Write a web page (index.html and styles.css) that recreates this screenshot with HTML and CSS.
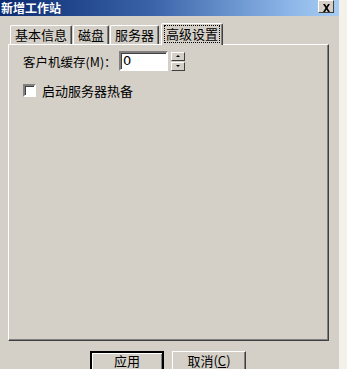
FILE: index.html
```html
<!DOCTYPE html>
<html lang="zh-CN">
<head>
    <meta charset="UTF-8">
    <title>新增工作站</title>
    <link rel="stylesheet" href="styles.css">
</head>
<body>
    <div class="screen">
        <div class="window">
            <div class="titlebar">
                <span class="title">新增工作站</span>
                <span class="close-btn">
                    <svg width="9" height="8" viewBox="0 0 9 8"><path d="M1 0h2l1.5 2.5L6 0h2L5.5 4 8 8H6L4.5 5.5 3 8H1l2.5-4z" fill="#000"/></svg>
                </span>
            </div>

            <div class="tabs">
                <div class="tab">基本信息</div>
                <div class="tab">磁盘</div>
                <div class="tab">服务器</div>
                <div class="tab active"><span class="focus">高级设置</span></div>
            </div>

            <div class="panel">
                <div class="row">
                    <label class="label">客户机缓存(M)：</label>
                    <div class="input">0</div>
                    <div class="spin">
                        <span class="spin-btn"><i class="arrow up"></i></span>
                        <span class="spin-btn"><i class="arrow down"></i></span>
                    </div>
                </div>
                <div class="row check-row">
                    <span class="checkbox"></span>
                    <span>启动服务器热备</span>
                </div>
            </div>

            <div class="buttons">
                <div class="btn default">应用</div>
                <div class="btn">取消(<u>C</u>)</div>
            </div>
        </div>
        <div class="edge"></div>
    </div>
</body>
</html>
```

FILE: styles.css
```css
* {
    margin: 0;
    padding: 0;
    box-sizing: border-box;
}

body {
    width: 347px;
    height: 369px;
    overflow: hidden;
    background: #f4f0ea;
    font-family: "Noto Sans CJK SC", "DejaVu Sans", sans-serif;
    font-size: 12px;
    color: #000;
}

.screen {
    display: flex;
    height: 369px;
}

.window {
    width: 339px;
    height: 369px;
    background: #d4d0c8;
    overflow: hidden;
}

.edge {
    flex: 1;
    background: #f4f0ea;
}

/* barre de titre */
.titlebar {
    height: 16px;
    background: linear-gradient(90deg, #0c2b70 0%, #3a64a8 45%, #8cb6e8 85%, #a8cdf2 100%);
    display: flex;
    align-items: center;
    justify-content: space-between;
    padding: 0 5px 0 1px;
}

.title {
    color: #fff;
    font-weight: bold;
    font-size: 12px;
    line-height: 16px;
    white-space: nowrap;
}

.close-btn {
    width: 16px;
    height: 13px;
    margin-top: -3px;
    background: #d4d0c8;
    border: 1px solid;
    border-color: #fff #404040 #404040 #fff;
    display: flex;
    align-items: center;
    justify-content: center;
    padding-top: 2px;
}

/* onglets */
.tabs {
    display: flex;
    align-items: flex-end;
    height: 28px;
    padding-left: 10px;
    gap: 1px;
}

.tab {
    height: 19px;
    padding: 0 4px;
    line-height: 17px;
    font-size: 13px;
    border: 1px solid;
    border-bottom: none;
    border-color: #fff #404040 transparent #fff;
    border-radius: 2px 2px 0 0;
    box-shadow: inset -1px 0 0 #808080;
}

.tab.active {
    height: 22px;
    margin-left: 1px;
    padding: 1px 2px 0;
    position: relative;
    z-index: 1;
    background: #d4d0c8;
    margin-bottom: -1px;
}

.focus {
    display: block;
    border: 1px dotted #000;
    line-height: 16px;
    padding: 0 1px;
}

.panel {
    margin-left: 8px;
    width: 321px;
    height: 297px;
    border: 1px solid;
    border-color: #fff #404040 #404040 #fff;
    box-shadow: inset -1px -1px 0 #808080;
    padding: 6px 0 0 14px;
}

.row {
    display: flex;
    align-items: center;
    height: 20px;
}

.label {
    width: 96px;
    font-size: 12.5px;
    white-space: nowrap;
}

.input {
    width: 49px;
    height: 20px;
    background: #fff;
    border: 2px solid;
    border-color: #808080 #fff #fff #808080;
    box-shadow: inset 1px 1px 0 #404040;
    font-family: "DejaVu Sans", sans-serif;
    font-size: 13px;
    line-height: 15px;
    padding-left: 2px;
}

.spin {
    margin-left: 3px;
    display: flex;
    flex-direction: column;
    gap: 1px;
}

.spin-btn {
    width: 14px;
    height: 9px;
    border: 1px solid;
    border-color: #fff #404040 #404040 #fff;
    display: flex;
    align-items: center;
    justify-content: center;
}

.arrow {
    width: 0;
    height: 0;
    border-left: 2px solid transparent;
    border-right: 2px solid transparent;
}

.arrow.up {
    border-bottom: 2px solid #000;
}

.arrow.down {
    border-top: 2px solid #000;
}

.check-row {
    margin-top: 9px;
    gap: 6px;
    font-size: 13px;
}

.checkbox {
    width: 13px;
    height: 13px;
    background: #fff;
    border: 2px solid;
    border-color: #808080 #fff #fff #808080;
    box-shadow: inset 1px 1px 0 #404040;
}

/* boutons */
.buttons {
    display: flex;
    gap: 8px;
    padding-left: 90px;
    margin-top: 10px;
}

.btn {
    width: 74px;
    height: 23px;
    border: 1px solid;
    border-color: #fff #404040 #404040 #fff;
    box-shadow: inset -1px -1px 0 #808080;
    text-align: center;
    line-height: 17px;
    font-size: 13px;
}

.btn.default {
    border: 2px solid #000;
    box-shadow: inset 1px 1px 0 #fff, inset -1px -1px 0 #808080;
    line-height: 15px;
}
```
